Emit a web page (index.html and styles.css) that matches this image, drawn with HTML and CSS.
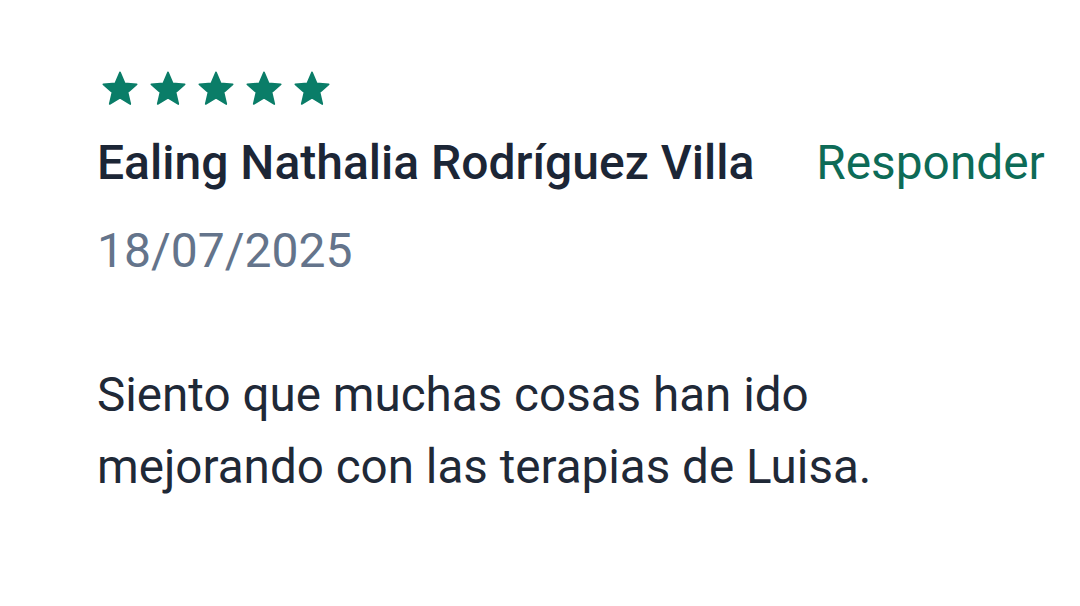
FILE: index.html
```html
<!DOCTYPE html>
<html lang="es">
<head>
  <meta charset="UTF-8">
  <meta name="viewport" content="width=device-width, initial-scale=1">
  <title>Reseña</title>
  <link rel="stylesheet" href="styles.css">
</head>
<body>
  <div class="review">
    <div class="stars">
      <svg viewBox="0 0 24 24"><path d="M12 17.27L18.18 21l-1.64-7.03L22 9.24l-7.19-.61L12 2 9.19 8.63 2 9.24l5.46 4.73L5.82 21z"/></svg>
      <svg viewBox="0 0 24 24"><path d="M12 17.27L18.18 21l-1.64-7.03L22 9.24l-7.19-.61L12 2 9.19 8.63 2 9.24l5.46 4.73L5.82 21z"/></svg>
      <svg viewBox="0 0 24 24"><path d="M12 17.27L18.18 21l-1.64-7.03L22 9.24l-7.19-.61L12 2 9.19 8.63 2 9.24l5.46 4.73L5.82 21z"/></svg>
      <svg viewBox="0 0 24 24"><path d="M12 17.27L18.18 21l-1.64-7.03L22 9.24l-7.19-.61L12 2 9.19 8.63 2 9.24l5.46 4.73L5.82 21z"/></svg>
      <svg viewBox="0 0 24 24"><path d="M12 17.27L18.18 21l-1.64-7.03L22 9.24l-7.19-.61L12 2 9.19 8.63 2 9.24l5.46 4.73L5.82 21z"/></svg>
    </div>
    <div class="head">
      <h3 class="name">Ealing Nathalia Rodríguez Villa</h3>
      <a href="#" class="reply">Responder</a>
    </div>
    <p class="date">18/07/2025</p>
    <p class="text">Siento que muchas cosas han ido mejorando con las terapias de Luisa.</p>
  </div>
</body>
</html>
```

FILE: styles.css
```css
body {
  margin: 0;
  background: #fff;
  font-family: Roboto, "Noto Sans", sans-serif;
  color: #1f2937;
}
.review {
  padding: 69px 0 0 97px;
}
.stars {
  display: flex;
  gap: 8px;
  margin-left: 3px;
}
.stars svg {
  width: 40px;
  height: 40px;
  fill: #0a7d68;
  stroke: #0a7d68;
  stroke-width: 1;
  stroke-linejoin: round;
}
.head {
  display: flex;
  align-items: baseline;
  margin-top: 25px;
}
.name {
  margin: 0;
  font-size: 48px;
  font-weight: 500;
  color: #1c2636;
}
.reply {
  margin-left: 62px;
  font-size: 47.8px;
  color: #0d6b57;
  text-decoration: none;
}
.date {
  margin: 31px 0 0;
  font-size: 48px;
  color: #64748b;
}
.text {
  margin: 80px 0 0;
  width: 820px;
  font-size: 47.6px;
  line-height: 72px;
  color: #1f2937;
}
```
